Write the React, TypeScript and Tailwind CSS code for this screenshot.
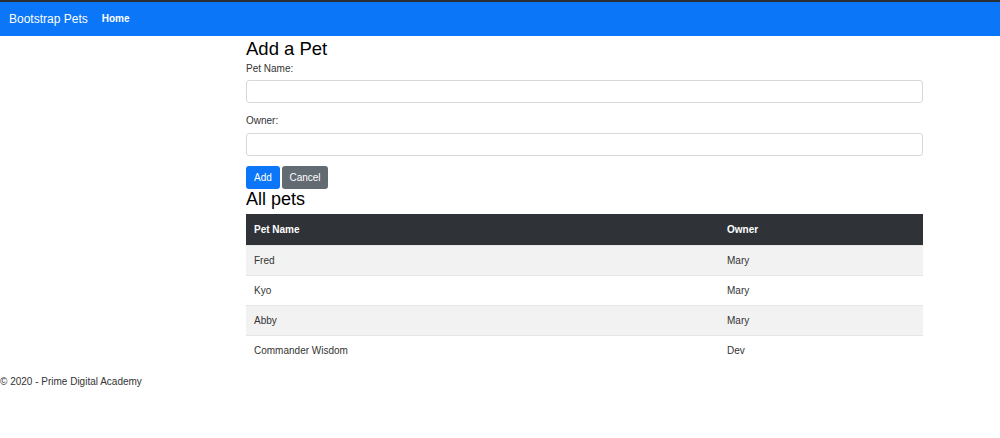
const PETS = [
  { name: 'Fred', owner: 'Mary' },
  { name: 'Kyo', owner: 'Mary' },
  { name: 'Abby', owner: 'Mary' },
  { name: 'Commander Wisdom', owner: 'Dev' },
]

export default function App() {
  return (
    <div className="min-h-[438px] bg-white text-[#212529] font-['Liberation_Sans',Arial,sans-serif] text-[10px]">
      {/* Navbar */}
      <nav className="border-t-2 border-[#2b2f33] bg-[#0b76f8] h-[36px] flex items-center px-[9px] gap-[14px]">
        <span className="text-white text-[12px] leading-none">Bootstrap Pets</span>
        <span className="text-white text-[10px] font-bold leading-none">Home</span>
      </nav>

      {/* Content */}
      <main className="w-[677px] ml-[246px]">
        <h3 className="text-[18.5px] leading-[21px] mt-[2px] text-black">Add a Pet</h3>

        <div className="mt-[3px]">
          <label className="block leading-[13px] text-[#333]">Pet Name:</label>
          <input className="block w-full h-[23px] mt-[5px] border border-[#d6d9dc] rounded-[3px] bg-white" />
        </div>

        <div className="mt-[11px]">
          <label className="block leading-[13px] text-[#333]">Owner:</label>
          <input className="block w-full h-[23px] mt-[6px] border border-[#d6d9dc] rounded-[3px] bg-white" />
        </div>

        <div className="flex gap-[2px] mt-[10px]">
          <button className="h-[23px] w-[34px] rounded-[3px] bg-[#0b76f8] text-white text-[10px] font-medium">Add</button>
          <button className="h-[23px] w-[46px] rounded-[3px] bg-[#626a72] text-white text-[10px] font-medium">Cancel</button>
        </div>

        <h3 className="text-[18px] leading-[21px] text-black">All pets</h3>

        <table className="w-full mt-[4px] border-collapse text-left">
          <thead>
            <tr className="bg-[#2f3338] text-white h-[31px]">
              <th className="w-[473px] pl-[8px] font-bold">Pet Name</th>
              <th className="pl-[8px] font-bold">Owner</th>
            </tr>
          </thead>
          <tbody>
            {PETS.map((p, i) => (
              <tr key={p.name} className={i % 2 === 0 ? 'bg-[#f2f2f2] h-[30px] border-t border-[#e4e6e8]' : 'bg-white h-[30px] border-t border-[#e4e6e8]'}>
                <td className="pl-[8px] text-[#333]">{p.name}</td>
                <td className="pl-[8px] text-[#333]">{p.owner}</td>
              </tr>
            ))}
          </tbody>
        </table>
      </main>

      <footer className="mt-[10px] leading-[13px] text-[#333]">© 2020 - Prime Digital Academy</footer>
    </div>
  )
}
